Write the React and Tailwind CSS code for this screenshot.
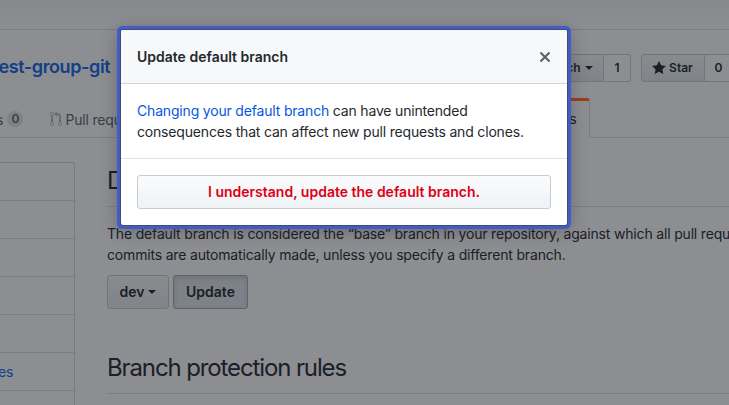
import React from "react";

function Caret() {
  return <span className="h-0 w-0 shrink-0 border-x-4 border-t-4 border-x-transparent border-t-[#1a2026]" />;
}

function PullIcon() {
  return (
    <svg width="12" height="16" viewBox="0 0 12 16" fill="#696c71" className="shrink-0">
      <path d="M11 11.28V5c-.03-.78-.34-1.47-.94-2.06C9.46 2.35 8.78 2.03 8 2H7V0L4 3l3 3V4h1c.27.02.48.11.69.31.21.2.3.42.31.69v6.28A1.993 1.993 0 0 0 10 15a1.993 1.993 0 0 0 1-3.72zm-1 2.92c-.66 0-1.2-.55-1.2-1.2 0-.65.55-1.2 1.2-1.2.65 0 1.2.55 1.2 1.2 0 .65-.55 1.2-1.2 1.2zM4 3c0-1.11-.89-2-2-2a1.993 1.993 0 0 0-1 3.72v6.56A1.993 1.993 0 0 0 2 15a1.993 1.993 0 0 0 1-3.72V4.72c.59-.34 1-.98 1-1.72zm-.8 10c0 .66-.55 1.2-1.2 1.2-.65 0-1.2-.55-1.2-1.2 0-.65.55-1.2 1.2-1.2.65 0 1.2.55 1.2 1.2zM2 4.2C1.34 4.2.8 3.65.8 3c0-.65.55-1.2 1.2-1.2.65 0 1.2.55 1.2 1.2 0 .65-.55 1.2-1.2 1.2z" />
    </svg>
  );
}

function StarIcon() {
  return (
    <svg width="14" height="16" viewBox="0 0 14 16" fill="#1a2026" className="shrink-0">
      <path d="M14 6l-4.9-.64L7 1 4.9 5.36 0 6l3.6 3.26L2.67 14 7 11.67 11.33 14l-.93-4.74z" />
    </svg>
  );
}

function CloseIcon() {
  return (
    <svg width="12" height="16" viewBox="0 0 12 16" fill="#586069">
      <path fillRule="evenodd" d="M7.48 8l3.75 3.75-1.48 1.48L6 9.48l-3.75 3.75-1.48-1.48L4.52 8 .77 4.25l1.48-1.48L6 6.52l3.75-3.75 1.48 1.48z" />
    </svg>
  );
}

function RepoHeader() {
  return (
    <header className="flex h-[68px] shrink-0 items-start">
      <div className="w-[117px] shrink-0 whitespace-nowrap pt-[25px] text-[18px] font-semibold leading-6 tracking-[-0.4px] text-[#123f86]">
        <span className="-ml-[1.5px]">est-group-git</span>
      </div>
      <div className="mt-[28px] h-5 w-16 rounded-[3px] border border-[#77797d]" />
      <div className="ml-auto mt-6 flex h-7 shrink-0 text-[12px] font-semibold text-[#1a2026]">
        <div className="flex w-[62px] items-center justify-end gap-[4.5px] rounded-l-[3px] border border-[#727579] bg-linear-to-b from-[#888c8f] to-[#808488] pr-2.5">
          <span>Branch</span>
          <Caret />
        </div>
        <div className="flex w-[27px] items-center justify-center rounded-r-[3px] border border-l-0 border-[#727579]">1</div>
        <div className="ml-2.5 flex w-16 items-center justify-center gap-[3px] rounded-l-[3px] border border-[#727579] bg-linear-to-b from-[#888c8f] to-[#808488] pr-px">
          <StarIcon />
          <span>Star</span>
        </div>
        <div className="flex w-6 items-center border-y border-[#727579] pl-[9.5px]">0</div>
      </div>
    </header>
  );
}

function Tabs() {
  return (
    <nav className="flex h-10 shrink-0 text-[14px] text-[#393f46]">
      <div className="flex w-[500px] shrink-0 items-center border-b border-[#7b7d81] pt-[3px]">
        <span className="-ml-[4px]">s</span>
        <span className="ml-[4px] flex h-4 w-4 items-center justify-center rounded-full bg-[#808185] text-[12px] font-semibold">0</span>
        <span className="ml-[27px] flex items-center gap-[3px]">
          <PullIcon />
          <span className="whitespace-nowrap tracking-[-0.17px]">Pull requ</span>
        </span>
      </div>
      <div className="flex w-[90px] shrink-0 items-center justify-end rounded-t-[3px] border-r border-t-[3px] border-r-[#7b7d81] border-t-[#9a4017] pr-[12.5px] text-[#1a2026]">
        <span className="-mt-[3px] tracking-[-0.17px]">ings</span>
      </div>
      <div className="flex-1 border-b border-[#7b7d81]" />
    </nav>
  );
}

const menu = ["", "", "", "", "", "es", ""];

function Sidebar() {
  return (
    <aside className="mt-6 w-[75px] shrink-0 rounded-tr-[3px] border-r border-t border-[#77797d]">
      {menu.map((label, i) => (
        <div key={i} className="flex h-[38px] shrink-0 items-center border-b border-[#7b7d81] text-[14px] tracking-[-0.17px] text-[#123f86]">
          <span className="-ml-[2px]">{label}</span>
        </div>
      ))}
    </aside>
  );
}

function Content() {
  return (
    <section className="ml-8 w-[700px] shrink-0 pt-6 text-[#1a2026]">
      <h2 className="h-[45px] border-b border-[#7b7d81] pt-px text-[24px] leading-9 tracking-[-1.12px]">D</h2>
      <p className="mt-4 whitespace-nowrap text-[14px] leading-[21px] tracking-[-0.175px]">
        The default branch is considered the “base” branch in your repository, against which all pull requ
        <br />
        commits are automatically made, unless you specify a different branch.
      </p>
      <div className="mt-2.5 flex gap-1 text-[14px] font-semibold">
        <div className="flex h-[34px] w-[62px] items-center justify-center gap-1 rounded-[3px] border border-[#6f747a] bg-linear-to-b from-[#888c8f] to-[#808488]">
          <span className="-mt-0.5">dev</span>
          <Caret />
        </div>
        <div className="flex h-[34px] w-[75px] items-center justify-center rounded-[3px] border border-[#5f6267] bg-[#7d8288] pb-0.5 shadow-[inset_0_2px_4px_rgba(27,31,35,0.15)]">
          Update
        </div>
      </div>
      <h2 className="mt-10 h-[45px] border-b border-[#7b7d81] pt-px text-[24px] leading-9 tracking-[-1.12px]">Branch protection rules</h2>
    </section>
  );
}

function Dialog() {
  return (
    <div
      role="dialog"
      className="absolute left-[121px] top-[30px] flex h-[195px] w-[446px] flex-col rounded-[2px] bg-white text-[14px] text-[#24292e] shadow-[0_0_0_1px_#3f4b73,0_0_0_4px_#425cc4,0_3px_18px_3px_rgba(20,22,32,0.3)]"
    >
      <div className="flex h-[54px] shrink-0 items-center justify-between rounded-t-[2px] border-b border-[#d1d5da] bg-[#f6f8fa] px-4">
        <span className="font-semibold">Update default branch</span>
        <CloseIcon />
      </div>
      <p className="h-[75px] shrink-0 whitespace-nowrap border-b border-[#e1e4e8] px-4 pt-4 leading-[21px] tracking-[-0.18px]">
        <span className="text-[#0657e0]">Changing your default branch</span> can have unintended
        <br />
        consequences that can affect new pull requests and clones.
      </p>
      <div className="px-4 pt-4">
        <button className="flex h-[34px] w-full items-center justify-center rounded-[3px] border border-[#c8ccd0] bg-linear-to-b from-[#fafbfc] to-[#eff3f6] pb-0.5 font-semibold text-[#de0016]">
          I understand, update the default branch.
        </button>
      </div>
    </div>
  );
}

export default function App() {
  return (
    <main className="relative flex h-[405px] w-[729px] flex-col overflow-hidden bg-[#8d8e92] font-[Inter,'Liberation_Sans',sans-serif]">
      <div className="h-[30px] shrink-0 border-b border-[#7b7d81] bg-linear-to-b from-[#878a8d] to-[#8c8e92]" />
      <RepoHeader />
      <Tabs />
      <div className="flex min-h-0 flex-1">
        <Sidebar />
        <Content />
      </div>
      <Dialog />
    </main>
  );
}
